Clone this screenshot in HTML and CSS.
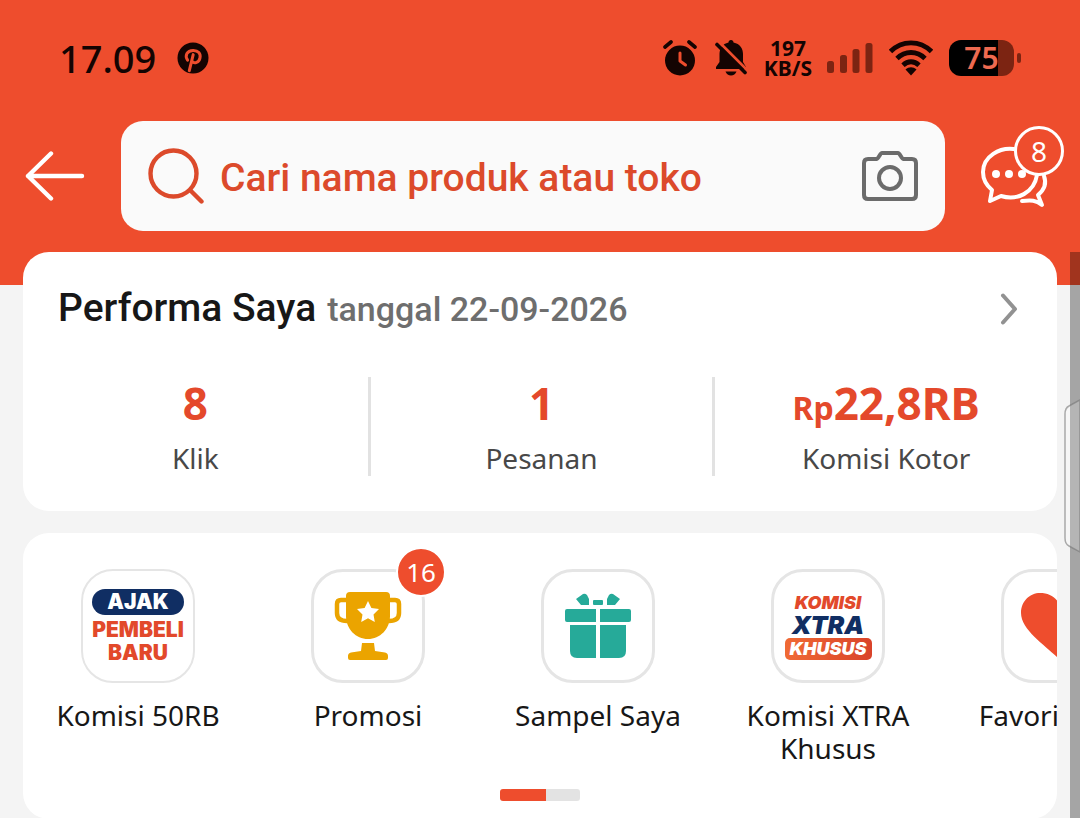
FILE: index.html
```html
<!DOCTYPE html>
<html lang="id">
<head>
<meta charset="utf-8">
<meta name="viewport" content="width=device-width, initial-scale=1">
<title>Performa Saya</title>
<link rel="stylesheet" href="styles.css">
</head>
<body>
<header class="header">
  <div class="status">
    <span class="clock">17.09</span>
    <svg class="pin" width="32" height="32" viewBox="0 0 32 32" aria-hidden="true">
      <circle cx="16" cy="16" r="15.5" fill="#140402"/>
      <path d="M10.600 18.200C7.400 13.400 10.200 8.600 16 8.400c5.300-.2 7.900 3.300 7 7.500-.9 4.500-5.600 6.300-8 3.400M16.200 12.600l-3.900 16" fill="none" stroke="#ee4d2d" stroke-width="3" stroke-linecap="round"/>
    </svg>
    <svg class="alarm" width="34" height="36" viewBox="0 0 34 36" aria-hidden="true">
      <circle cx="17" cy="20.500" r="15" fill="#140402"/>
      <path d="M2 7l6-5M32 7l-6-5" stroke="#140402" stroke-width="3.600" stroke-linecap="round"/>
      <path d="M17 13v8l5.500 4" fill="none" stroke="#ee4d2d" stroke-width="3" stroke-linecap="round" stroke-linejoin="round"/>
    </svg>
    <svg class="bell" width="32" height="36" viewBox="0 0 32 36" aria-hidden="true">
      <path d="M16 0c1.500 0 2.500 1 2.500 2.600C25 4 28 8.500 28 14v8l3 5v2H1v-2l3.500-5v-8C4.500 8.500 7.500 4 13.500 2.600 13.500 1 14.500 0 16 0z" fill="#140402"/>
      <path d="M10.500 31.500h11c-1 2.700-3 4-5.500 4s-4.500-1.300-5.500-4z" fill="#140402"/>
      <path d="M4 2l28 28" stroke="#ee4d2d" stroke-width="3"/>
      <path d="M2 4.500l28 28" stroke="#140402" stroke-width="3.600" stroke-linecap="round"/>
    </svg>
    <span class="speed">197<br>KB/S</span>
    <svg class="signal" width="46" height="32" viewBox="0 0 46 32" fill="#7c2412" aria-hidden="true">
      <rect x="0" y="19" width="7" height="12" rx="2.500"/><rect x="13" y="13" width="7" height="18" rx="2.500"/><rect x="25.500" y="7" width="7" height="24" rx="2.500"/><rect x="38.500" y="1" width="7" height="30" rx="2.500"/>
    </svg>
    <svg class="wifi" width="44" height="36" viewBox="0 0 44 36" fill="none" stroke="#140402" stroke-width="4.800" aria-hidden="true">
      <path d="M1.500 11.500C13-.1 31-.1 42.500 11.500M8 18.500c8-8 20-8 28 0M14 25.200c4.800-4.600 11.200-4.600 16 0"/>
      <path d="M16.500 29.500c3.500-3 7.500-3 11 0L22 35.500z" fill="#140402" stroke="none"/>
    </svg>
    <span class="battery"><span class="battery-body">75</span><span class="battery-tip"></span></span>
  </div>
  <div class="search-row">
    <button class="icon-button" type="button" aria-label="Kembali">
      <svg width="60" height="50" viewBox="0 0 60 50" fill="none" stroke="#fff" stroke-width="4.400" stroke-linecap="round" stroke-linejoin="round" aria-hidden="true"><path d="M26 2.500L3 25l23 22.500M3 25h54"/></svg>
    </button>
    <form class="search">
      <svg width="56" height="56" viewBox="0 0 56 56" fill="none" stroke="#dc4a2b" stroke-width="4.400" stroke-linecap="round" aria-hidden="true"><circle cx="25.500" cy="25.500" r="23"/><path d="M42.500 42.500l11 11"/></svg>
      <input class="search-input" type="text" aria-label="Cari" placeholder="Cari nama produk atau toko">
      <button class="icon-button" type="button" aria-label="Cari dengan kamera">
        <svg width="56" height="50" viewBox="0 0 56 50" fill="none" stroke="#6b6b6b" stroke-width="4" stroke-linejoin="round" aria-hidden="true"><path d="M6 8h8.500c2 0 3.500-6 5.500-6h16c2 0 3.500 6 5.500 6H50q4 0 4 4v32q0 4-4 4H6q-4 0-4-4V12q0-4 4-4z"/><circle cx="28" cy="27" r="11"/></svg>
      </button>
    </form>
    <button class="icon-button chat" type="button" aria-label="Chat">
      <svg width="70" height="64" viewBox="0 0 70 64" fill="none" stroke="#fff" stroke-width="4" stroke-linecap="round" stroke-linejoin="round" aria-hidden="true">
        <path d="M36 5.500C18 2 2 13 2 28c0 7 3 13 9 18L9 57l11-5c16 5 33-3 36-21"/>
        <path d="M63 32c3 8 0 14-6 19l4 10c-6-5-11-5-20-4"/>
        <g fill="#fff" stroke="none"><circle cx="15" cy="30" r="4"/><circle cx="28" cy="30" r="4"/><circle cx="41" cy="30" r="4"/></g>
      </svg>
      <span class="chat-badge">8</span>
    </button>
  </div>
</header>
<main class="content">
  <section class="card performance">
    <a class="performance-head" href="#performa">
      <h1 class="title">Performa Saya</h1>
      <span class="date">tanggal 22-09-2026</span>
      <svg class="chevron" width="18" height="32" viewBox="0 0 18 32" fill="none" stroke="#929292" stroke-width="4" stroke-linecap="round" stroke-linejoin="round" aria-hidden="true"><path d="M3 2.500L15 16 3 29.500"/></svg>
    </a>
    <dl class="stats">
      <div class="stat"><dt>Klik</dt><dd>8</dd></div>
      <div class="stat"><dt>Pesanan</dt><dd>1</dd></div>
      <div class="stat"><dt>Komisi Kotor</dt><dd><small>Rp</small>22,8RB</dd></div>
    </dl>
  </section>
  <nav class="card shortcuts" aria-label="Pintasan">
    <div class="shortcut-list">
      <a class="shortcut" href="#komisi">
        <span class="tile tile-invite"><span class="pill">AJAK</span><span>PEMBELI</span><span>BARU</span></span>
        <span class="caption">Komisi 50RB</span>
      </a>
      <a class="shortcut" href="#promosi">
        <span class="tile">
          <svg width="68" height="70" viewBox="0 0 68 70" aria-hidden="true">
            <path d="M12 9H7q-4 0-4 4v9q0 8 10 8M56 9h5q4 0 4 4v9q0 8-10 8" fill="none" stroke="#eba400" stroke-width="4.500"/>
            <path d="M16 1h36q4 0 4 4v20c0 13-10 23-22 23S12 38 12 25V5q0-4 4-4zM28 52h12l1 8 10 1.500q3 .5 3 3.500v2q0 2-2 2H16q-2 0-2-2v-2q0-3 3-3.500l10-1.500z" fill="#eba400"/>
            <path d="M34 10l3.400 7 7.600 1-5.500 5.400 1.300 7.600-6.800-3.700-6.800 3.700 1.300-7.600L23 18l7.600-1z" fill="#fff"/>
          </svg>
          <span class="badge">16</span>
        </span>
        <span class="caption">Promosi</span>
      </a>
      <a class="shortcut" href="#sampel">
        <span class="tile">
          <svg width="66" height="66" viewBox="0 0 66 66" fill="#26aa99" aria-hidden="true">
            <path d="M2 16h29v13H2q-2 0-2-2v-9q0-2 2-2zM35 16h29q2 0 2 2v9q0 2-2 2H35zM5 32h26v33H12q-7 0-7-7zM35 32h26v26q0 7-7 7H35z"/>
            <path d="M11 6l7-5q2-1 4 1l2 4v6h-8zM55 6l-7-5q-2-1-4 1l-2 4v6h8z"/><rect x="28" y="7" width="10" height="5" rx="1"/>
          </svg>
        </span>
        <span class="caption">Sampel Saya</span>
      </a>
      <a class="shortcut" href="#xtra">
        <span class="tile tile-xtra"><span>KOMISI</span><span class="xtra">XTRA</span><span class="ribbon">KHUSUS</span></span>
        <span class="caption">Komisi XTRA Khusus</span>
      </a>
      <a class="shortcut" href="#favorit">
        <span class="tile">
          <svg width="74" height="66" viewBox="0 0 74 66" fill="#ee4d2d" aria-hidden="true"><path d="M37 65C25 53 0 37 0 20 0 8 9 0 19 0c8 0 14 3 18 9 4-6 10-9 18-9 10 0 19 8 19 20 0 17-25 33-37 45z"/></svg>
        </span>
        <span class="caption">Favorit Saya</span>
      </a>
    </div>
    <div class="pager"></div>
  </nav>
</main>
<div class="scrollbar" aria-hidden="true"></div>
<div class="edge-handle" aria-hidden="true"><svg width="16" height="156" viewBox="0 0 16 156"><path d="M16 2L5 8Q1 10 1 16v124q0 6 4 8l11 6z" fill="#fff" fill-opacity=".18" stroke="#777" stroke-opacity=".6" stroke-width="1.500"/></svg></div>
</body>
</html>
```
FILE: styles.css
```css
* {
  box-sizing: border-box;
}

body {
  position: relative;
  margin: 0;
  min-height: 100vh;
  overflow: hidden;
  background: #f4f4f4;
  color: #171717;
  font-family: "Noto Sans", sans-serif;
}

a {
  color: inherit;
  text-decoration: none;
}

svg {
  display: block;
  flex: none;
}

.header {
  padding: 30px 16px 54px 25px;
  background: #ee4d2d;
}

.status {
  display: flex;
  align-items: center;
  height: 55px;
  padding: 0 43px 0 34px;
  color: #140402;
}

.clock {
  font-size: 38px;
  font-weight: 500;
  line-height: 54px;
}

.pin {
  margin-left: 21px;
}

.alarm {
  margin-left: auto;
}

.bell {
  margin-left: 18px;
}

.speed {
  margin: 0 15px 0 17px;
  font-size: 21px;
  font-weight: 700;
  line-height: 20px;
  text-align: center;
}

.wifi {
  margin: 0 16px;
}

.battery {
  display: flex;
  align-items: center;
  gap: 3px;
}

.battery-body {
  width: 65px;
  border-radius: 12px;
  background: linear-gradient(90deg, #000 75%, #7c2412 75%);
  color: #ee6a50;
  font-size: 30px;
  font-weight: 600;
  line-height: 36px;
  text-align: center;
}

.battery-tip {
  width: 4px;
  height: 10px;
  border-radius: 2px;
  background: #7c2412;
}

.search-row {
  display: flex;
  align-items: center;
  margin-top: 36px;
}

.icon-button {
  flex: none;
  padding: 0;
  border: 0;
  background: none;
}

.search {
  display: flex;
  flex: 1;
  align-items: center;
  min-width: 0;
  height: 110px;
  margin: 0 36px;
  padding: 0 27px;
  border-radius: 22px;
  background: #fafafa;
}

.search-input {
  flex: 1;
  min-width: 0;
  margin-left: 16px;
  padding: 4px 0 0;
  border: 0;
  outline: 0;
  background: none;
  font: 500 39px/48px Roboto, sans-serif;
}

.search-input::placeholder {
  color: #dc4a2b;
  opacity: 1;
}

.chat {
  position: relative;
  width: 83px;
}

.chat-badge {
  position: absolute;
  top: -18px;
  right: 0;
  width: 50px;
  border: 3px solid #fff;
  border-radius: 50%;
  background: #ee4d2d;
  color: #fff;
  font: 400 28px/44px "Noto Sans", sans-serif;
  text-align: center;
}

.content {
  position: relative;
  display: grid;
  gap: 22px;
  margin-top: -33px;
  padding: 0 23px;
}

.card {
  min-width: 0;
  border-radius: 26px;
  background: #fff;
}

.performance {
  padding: 28px 0 35px;
}

.performance-head {
  display: flex;
  align-items: baseline;
  padding: 0 39px 0 35px;
  line-height: 56px;
}

.title {
  margin: 0;
  font: 500 39px/56px Roboto, sans-serif;
}

.date {
  margin-left: 11px;
  color: #6e6e6e;
  font: 500 34px/56px Roboto, sans-serif;
}

.chevron {
  align-self: center;
  margin-left: auto;
}

.stats {
  display: grid;
  grid-template-columns: repeat(3, 1fr);
  margin: 40px 0 0;
}

.stat {
  display: flex;
  flex-direction: column-reverse;
  gap: 11px;
  text-align: center;
}

.stat + .stat {
  border-left: 3px solid #e2e2e2;
}

.stat dt {
  color: #484848;
  font-size: 28px;
  line-height: 36px;
}

.stat dd {
  margin: 0;
  color: #e4492b;
  font-size: 44px;
  font-weight: 700;
  line-height: 52px;
}

.stat small {
  font-size: 32px;
  line-height: 1;
}

.shortcuts {
  padding: 36px 0 18px;
  overflow: hidden;
}

.shortcut-list {
  display: grid;
  grid-auto-columns: 230px;
  grid-auto-flow: column;
}

.shortcut {
  display: flex;
  flex-direction: column;
  align-items: center;
  gap: 16px;
}

.tile {
  position: relative;
  display: flex;
  flex-direction: column;
  align-items: center;
  justify-content: center;
  width: 114px;
  height: 114px;
  border: 3px solid #e5e5e5;
  border-radius: 32px;
  color: #e2492b;
  font-family: Inter, sans-serif;
  font-weight: 900;
}

.badge {
  position: absolute;
  top: -25px;
  right: -24px;
  width: 50px;
  border: 2px solid #fff;
  border-radius: 50%;
  background: #ee4d2d;
  color: #fff;
  font: 400 26px/46px "Noto Sans", sans-serif;
  text-align: center;
}

.tile-invite {
  border-width: 2px;
  font-size: 21px;
  line-height: 23px;
}

.pill {
  width: 92px;
  margin-bottom: 3px;
  border-radius: 13px;
  background: #102e63;
  color: #fff;
  line-height: 26px;
  text-align: center;
}

.tile-xtra {
  font-size: 18px;
  font-style: italic;
  line-height: 20px;
}

.xtra {
  margin-bottom: 1px;
  color: #102e63;
  font-size: 25px;
  line-height: 24px;
}

.ribbon {
  width: 87px;
  border-radius: 5px;
  background: linear-gradient(90deg, #f06a35, #d9432a);
  color: #fff;
  line-height: 22px;
  text-align: center;
}

.caption {
  width: 180px;
  font-size: 28px;
  line-height: 33px;
  text-align: center;
}

.pager {
  width: 80px;
  height: 12px;
  margin: 24px auto 0;
  border-radius: 3px;
  background: linear-gradient(90deg, #ee4d2d 58%, #e3e3e3 58%);
}

.scrollbar {
  position: absolute;
  top: 252px;
  right: 0;
  bottom: 0;
  width: 10px;
  background: rgba(0, 0, 0, 0.32);
}

.edge-handle {
  position: absolute;
  top: 398px;
  right: 0;
}
```
